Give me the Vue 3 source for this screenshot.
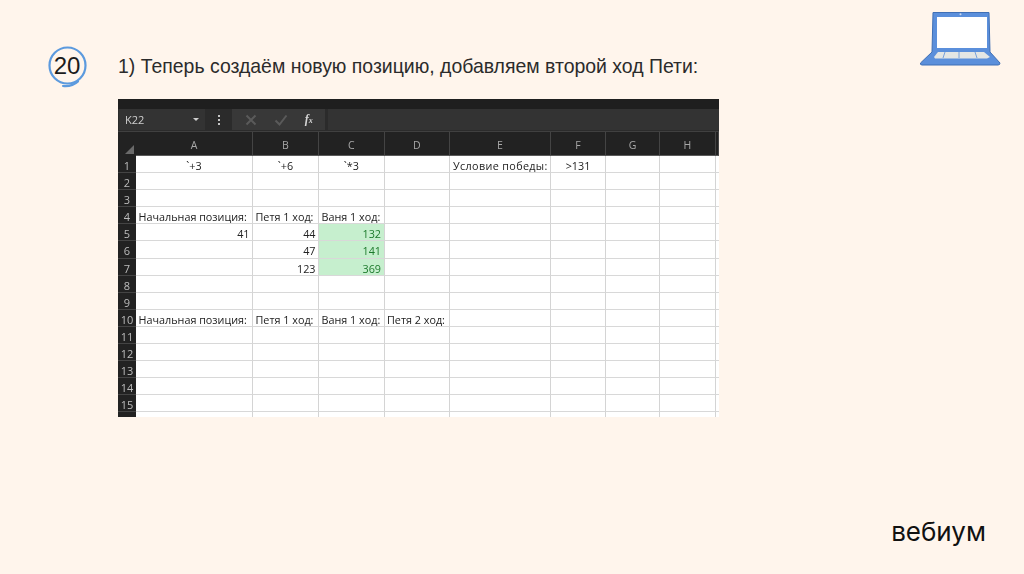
<script setup>
const columns = ['A', 'B', 'C', 'D', 'E', 'F', 'G', 'H', '']
const head = ['Начальная позиция:', 'Петя 1 ход:', 'Ваня 1 ход:']
const rows = {
  1: [['`+3', 'c'], ['`+6', 'c'], ['`*3', 'c'], null, ['Условие победы:', 'wide'], ['>131', 'c']],
  4: head.map((t) => [t, 'l']),
  5: [['41', 'r'], ['44', 'r'], ['132', 'g']],
  6: [null, ['47', 'r'], ['141', 'g']],
  7: [null, ['123', 'r'], ['369', 'g']],
  10: [...head.map((t) => [t, 'l']), ['Петя 2 ход:', 'l']],
}
const grid = Array.from({ length: 16 }, (_, i) => {
  const n = i + 1
  const src = rows[n] || []
  return {
    n,
    label: n < 16 ? n : '',
    cells: columns.map((_, c) => {
      const v = src[c]
      return { text: v ? v[0] : '', kind: v ? v[1] : '' }
    }),
  }
})
</script>

<template>
  <div class="page">
    <header class="top">
      <div class="badge">
        <svg class="ring" width="44" height="44" viewBox="0 0 44 44">
          <circle cx="21.5" cy="20.5" r="18" fill="none" stroke="#5c9ade" stroke-width="2.2" />
          <path d="M17 41 C22 41.6 28 40 32 36.4" fill="none" stroke="#5c9ade" stroke-width="2.2" stroke-linecap="round" />
        </svg>
        <span class="num">20</span>
      </div>
      <h1 class="title">1) Теперь создаём новую позицию, добавляем второй ход Пети:</h1>
      <svg class="laptop" width="82" height="56" viewBox="0 0 82 56">
        <path d="M14 1.5 H70 L71 41 L81 52 Q81 54 79 54 H3 Q1 54 1.5 52 L13 41 Z" fill="#5b8fdb" stroke="#3f6fb5" stroke-width="1" />
        <rect x="18" y="6" width="50" height="31" fill="#ffffff" />
        <path d="M15 46 L19 41 H65 L71 46 L68 47.5 H16 Z" fill="#e4e6e4" />
        <path d="M26 41 L24 47 M40 41 V47 M56 41 L58 47" stroke="#5b8fdb" stroke-width="0.8" />
        <circle cx="41.5" cy="3.3" r="1" fill="#c9d9f0" />
      </svg>
    </header>

    <section class="sheet">
      <div class="strip"></div>
      <div class="toolbar">
        <div class="namebox"><span>K22</span><i class="caret"></i></div>
        <div class="dots"><b></b><b></b><b></b></div>
        <div class="actions">
          <svg width="14" height="14" viewBox="0 0 14 14"><path d="M2.5 2.5 L11.5 11.5 M11.5 2.5 L2.5 11.5" stroke="#5a5a5a" stroke-width="2" /></svg>
          <svg width="14" height="14" viewBox="0 0 14 14"><path d="M1.5 7.5 L5.5 11.5 L12.5 2.5" fill="none" stroke="#5a5a5a" stroke-width="2" /></svg>
          <em class="fx">f<small>x</small></em>
        </div>
        <div class="formula"></div>
      </div>
      <div class="table">
        <div class="corner"><i></i></div>
        <div v-for="c in columns" :key="c" class="colhead">{{ c }}</div>
        <template v-for="row in grid" :key="row.n">
          <div class="rowhead">{{ row.label }}</div>
          <div v-for="(cell, i) in row.cells" :key="i" class="cell" :class="cell.kind">{{ cell.text }}</div>
        </template>
      </div>
    </section>

    <footer class="brand">вебиум</footer>
  </div>
</template>

<style>
html, body { margin: 0; background: #fff5ec; }
</style>

<style scoped>
.page {
  width: 1024px;
  height: 574px;
  box-sizing: border-box;
  background: #fff5ec;
  display: flex;
  flex-direction: column;
  overflow: hidden;
  font-family: "Liberation Sans", sans-serif;
  color: #1b1b1b;
}
.top {
  height: 99px;
  display: flex;
  align-items: flex-start;
  padding-left: 46px;
  position: relative;
}
.badge {
  position: relative;
  width: 44px;
  height: 44px;
  margin-top: 45px;
  flex: none;
  display: flex;
  align-items: center;
  justify-content: center;
}
.ring { position: absolute; left: 0; top: 0; }
.num { font-size: 24px; line-height: 1; position: relative; top: -1px; left: -1px; }
.title {
  margin: 53px 0 0 28px;
  font-size: 19.45px;
  line-height: 26px;
  font-weight: 400;
  white-space: nowrap;
  color: #2b2b2b;
}
.laptop { position: absolute; left: 919px; top: 11px; }

.sheet {
  margin-left: 118px;
  width: 601px;
  height: 318px;
  overflow: hidden;
  background: #fff;
  font-family: "Open Sans", sans-serif;
  font-size: 10.8px;
  filter: blur(0.3px);
}
.strip { height: 10px; background: #1f1f1f; }
.toolbar {
  height: 23px;
  box-sizing: border-box;
  background: #2b2b2b;
  border-bottom: 1px solid #404040;
  display: flex;
  align-items: stretch;
  padding-left: 1px;
}
.namebox {
  width: 86px;
  margin-bottom: 1px;
  background: #333;
  color: #cfcfcf;
  font-size: 11px;
  display: flex;
  align-items: center;
  justify-content: space-between;
  padding: 0 6px;
  box-sizing: border-box;
}
.caret {
  width: 0; height: 0;
  border-left: 3px solid transparent;
  border-right: 3px solid transparent;
  border-top: 3px solid #cfcfcf;
}
.dots {
  width: 27px;
  display: flex;
  flex-direction: column;
  align-items: center;
  justify-content: center;
  gap: 2px;
}
.dots b { width: 2px; height: 2px; background: #c4c4c4; }
.actions {
  width: 93px;
  margin-bottom: 1px;
  background: #383838;
  display: flex;
  align-items: center;
  justify-content: space-around;
  padding: 0 4px;
  box-sizing: border-box;
}
.fx {
  font-family: "Liberation Serif", serif;
  font-size: 12px;
  font-weight: 700;
  color: #d6d6d6;
}
.fx small { font-size: 8px; }
.formula { flex: 1; margin: 0 0 1px 3px; background: #333; }

.table {
  display: grid;
  grid-template-columns: 18px 117px 66px 65.5px 65.5px 101px 55px 54px 55.5px 3.5px;
  grid-template-rows: 24px;
  grid-auto-rows: 17.1px;
}
.corner {
  background: #222;
  position: relative;
}
.corner i {
  position: absolute;
  right: 2px;
  bottom: 2px;
  width: 0; height: 0;
  border-left: 9px solid transparent;
  border-bottom: 9px solid #6a6a6a;
}
.colhead {
  background: #222;
  color: #a8a8a8;
  text-align: center;
  line-height: 27px;
  font-size: 10.5px;
  border-right: 1px solid #444;
  border-bottom: 1px solid #5a5a5a;
  box-sizing: border-box;
}
.rowhead {
  background: #222;
  color: #bdbdbd;
  text-align: center;
  font-size: 11px;
  line-height: 19px;
  border-bottom: 1px solid #444;
  box-sizing: border-box;
  overflow: hidden;
}
.cell {
  background: #fff;
  border-right: 1px solid #d4d4d4;
  border-bottom: 1.5px solid #d8d8d8;
  box-sizing: border-box;
  line-height: 19px;
  padding: 0 2.5px;
  white-space: nowrap;
  color: #222;
}
.cell.c { text-align: center; }
.cell.r { text-align: right; }
.cell.wide { letter-spacing: 0.35px; padding-left: 3px; }
.cell.g { text-align: right; background: #c6efce; color: #1d7a2c; }
.brand {
  margin-top: auto;
  margin-right: 38px;
  margin-bottom: 25px;
  text-align: right;
  font-family: Inter, "Liberation Sans", sans-serif;
  font-size: 26px;
  font-weight: 400;
  line-height: 34px;
  color: #111;
}
</style>
